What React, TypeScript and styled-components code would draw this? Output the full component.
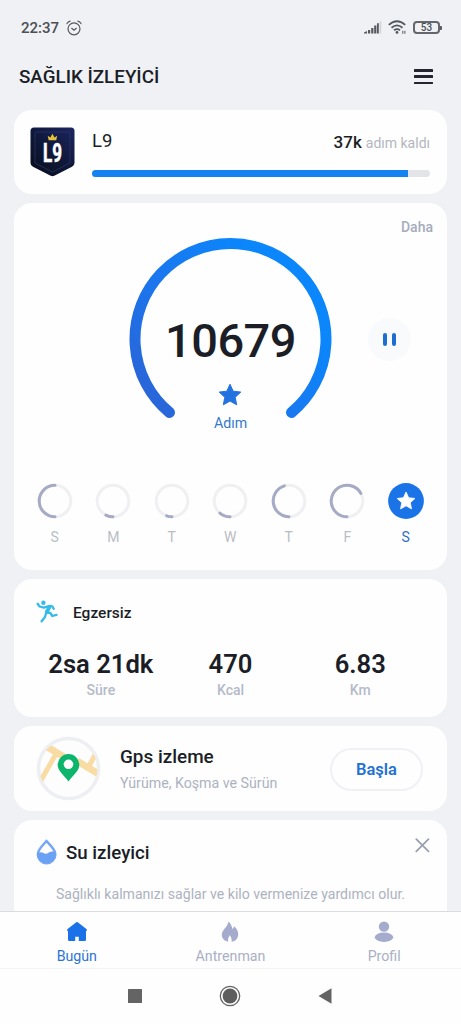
import React from 'react';
import styled, { createGlobalStyle } from 'styled-components';

const Global = createGlobalStyle`
  * { box-sizing: border-box; }
  body { margin: 0; background: #eff1f5; font-family: Roboto, "Noto Sans", sans-serif; }
`;

const Screen = styled.div`
  width: 461px;
  height: 1024px;
  overflow: hidden;
  display: flex;
  flex-direction: column;
  background: #eff1f5;
  color: #1b1e27;
`;

const Text = styled.span<{ $size?: number; $weight?: number; $color?: string; $track?: number; $line?: number }>`
  display: block;
  white-space: nowrap;
  font-size: ${p => p.$size ?? 14}px;
  font-weight: ${p => p.$weight ?? 400};
  color: ${p => p.$color ?? '#1b1e27'};
  letter-spacing: ${p => p.$track ?? 0}px;
  line-height: ${p => p.$line ?? 20}px;
`;

const StatusBar = styled.div`
  height: 55px;
  flex: none;
  display: flex;
  align-items: center;
  justify-content: space-between;
  padding: 0 19px 0 21px;
`;

const StatusGroup = styled.div<{ $gap: number }>`
  display: flex;
  align-items: center;
  gap: ${p => p.$gap}px;
`;

const Header = styled.header`
  height: 55px;
  flex: none;
  display: flex;
  align-items: flex-start;
  justify-content: space-between;
  padding: 12px 28px 0 19px;
`;

const MenuButton = styled.div`
  width: 19px;
  height: 15px;
  margin-top: 2px;
  display: flex;
  flex-direction: column;
  justify-content: space-between;
  & > i { display: block; height: 2.5px; background: #23262e; border-radius: 0.5px; }
`;

const Feed = styled.main`
  flex: 1;
  min-height: 0;
  overflow: hidden;
  padding: 0 14px;
  display: flex;
  flex-direction: column;
  gap: 9px;
`;

const Card = styled.section<{ $height: number }>`
  flex: none;
  height: ${p => p.$height}px;
  border-radius: 18px;
  background: #fefefe;
`;

const LevelCard = styled(Card)`
  display: flex;
  padding: 17px 17px 0 16px;
  gap: 17px;
`;

const LevelBody = styled.div`
  flex: 1;
  padding-top: 4px;
`;

const LevelRow = styled.div`
  display: flex;
  justify-content: space-between;
  height: 39px;
`;

const Remaining = styled.div`
  display: flex;
  align-items: baseline;
  gap: 4px;
  padding-top: 1px;
`;

const Track = styled.div`
  height: 7px;
  border-radius: 4px;
  overflow: hidden;
  background: #e3e4e7;
`;

const Fill = styled.div`
  height: 100%;
  width: 93.5%;
  background: #1482f0;
`;

const StepsCard = styled(Card)`
  display: flex;
  flex-direction: column;
`;

const More = styled.div`
  display: flex;
  justify-content: flex-end;
  padding: 14px 14px 0 0;
  height: 34px;
`;

const GaugeRow = styled.div`
  height: 190px;
  display: grid;
  grid-template-columns: 115px 203px 1fr;
`;

const Gauge = styled.div`
  grid-column: 2;
  display: grid;
  & > * { grid-area: 1 / 1; }
`;

const GaugeText = styled.div`
  display: flex;
  flex-direction: column;
  align-items: center;
  padding-top: 74px;
`;

const StarSlot = styled.div`
  height: 24px;
  margin: 12px 1px 6px 0;
`;

const PauseButton = styled.div`
  width: 43px;
  height: 43px;
  margin: 81px 0 0 36px;
  border-radius: 50%;
  background: #f8fafc;
  display: flex;
  align-items: center;
  justify-content: center;
  gap: 5px;
  & > i { width: 4px; height: 13px; border-radius: 2px; background: #1c6fd0; }
`;

const Week = styled.div`
  margin-top: 56px;
  padding: 0 11.5px;
  display: grid;
  grid-template-columns: repeat(7, 58.5px);
`;

const Day = styled.div`
  display: flex;
  flex-direction: column;
  align-items: center;
  gap: 8px;
  & > svg { display: block; }
`;

const ExerciseHead = styled.div`
  display: flex;
  align-items: center;
  gap: 15px;
  padding: 21px 0 0 22px;
  height: 46px;
  & > svg { margin-bottom: 3px; }
`;

const Stats = styled.div`
  display: grid;
  grid-template-columns: repeat(3, 129.7px);
  padding: 24px 0 0 22px;
`;

const Stat = styled.div`
  display: flex;
  flex-direction: column;
  align-items: center;
  gap: 1px;
`;

const GpsCard = styled(Card)`
  display: flex;
  align-items: center;
  padding: 0 24px 0 22px;
`;

const GpsBody = styled.div`
  flex: 1;
  padding: 3px 0 0 19px;
  display: flex;
  flex-direction: column;
  gap: 6px;
`;

const StartButton = styled.div`
  width: 93px;
  height: 43px;
  margin-top: 1px;
  padding-top: 1px;
  border: 2.5px solid #f0f1f4;
  border-radius: 22px;
  display: flex;
  align-items: center;
  justify-content: center;
`;

const WaterHead = styled.div`
  display: flex;
  align-items: flex-start;
  padding: 18px 17px 0 22px;
  height: 64px;
  & > svg:last-child { margin-left: auto; }
`;

const WaterTitle = styled.div`
  padding: 5px 0 0 8px;
`;

const Centered = styled.div`
  display: flex;
  justify-content: center;
`;

const TabBar = styled.nav`
  height: 58px;
  flex: none;
  display: grid;
  grid-template-columns: repeat(3, 1fr);
  background: #fefefe;
  border-top: 1px solid #d9dbdf;
  border-bottom: 1px solid #f3f3f5;
`;

const Tab = styled.div`
  display: flex;
  flex-direction: column;
  align-items: center;
  padding-top: 9px;
  gap: 4px;
`;

const SystemBar = styled.div`
  height: 55px;
  flex: none;
  display: flex;
  align-items: center;
  justify-content: center;
  gap: 77px;
  background: #fefefe;
  padding: 0 2px 1px 0;
`;

const STAR = 'M12 1.2l3.2 7 7.6.9-5.6 5.2 1.5 7.5L12 18.1l-6.7 3.7 1.5-7.5L1.2 9.1l7.6-.9z';

function Alarm() {
  return (
    <svg width="16" height="16" viewBox="0 0 16 16" fill="none" stroke="#55585e" strokeWidth="1.2" strokeLinecap="round">
      <circle cx="8" cy="8.8" r="6" />
      <path d="M5.7 8.3L8 10.3l2.3-2M1 3.6Q2 1.6 4.1 1.2M15 3.6Q14 1.6 11.9 1.2" />
    </svg>
  );
}

function Signal() {
  return (
    <svg width="18" height="13" viewBox="0 0 18 13" fill="#55585e">
      <path d="M0 12.5V11.4L3 9.9v2.6zM4 9h2.2v3.5H4zM7.2 7h2.2v5.5H7.2zM10.2 4.5h2.2v8h-2.2zM13 2.3h1.8v10.2H13z" />
      <path d="M15.600.5h1.600v12h-1.600z" fill="#d0d2d6" />
    </svg>
  );
}

function Wifi() {
  return (
    <svg width="19" height="15" viewBox="0 0 19 15" fill="none" stroke="#55585e" strokeWidth="1.8">
      <path d="M.8 4.9Q9 -2.3 17.2 4.9M3.5 7.7Q9 3 14.5 7.7M6 10.3Q9 7.9 12 10.3" />
      <circle cx="9" cy="12.4" r="1.4" fill="#55585e" stroke="none" />
      <path d="M14.8 10.8v3M16.9 10.8v3" strokeWidth="1" />
    </svg>
  );
}

const Battery = styled.div`
  width: 27px;
  height: 13px;
  border: 2px solid #63666c;
  border-radius: 4px;
  display: flex;
  align-items: center;
  justify-content: center;
`;

const BatteryTip = styled.i`
  width: 2px;
  height: 4px;
  border-radius: 0 1px 1px 0;
  background: #5a5d63;
`;

function Badge() {
  return (
    <svg width="45" height="50" viewBox="0 0 45 50">
      <defs>
        <linearGradient id="badge" x1="1" y1="0" x2="0.2" y2="1">
          <stop offset="0" stopColor="#1d2560" />
          <stop offset="0.5" stopColor="#10193d" />
          <stop offset="1" stopColor="#090e1d" />
        </linearGradient>
      </defs>
      <path d="M4 .5H41Q44.5.5 44.5 4V36Q44.5 38.5 42 39.8L24.3 48.8Q22.5 49.7 20.7 48.8L3 39.8Q.5 38.5.5 36V4Q.5.5 4 .5Z" fill="url(#badge)" />
      <path d="M7 5H38Q40 5 40 7V36L22.5 45 5 36V7Q5 5 7 5Z" fill="none" stroke="#2b3868" strokeWidth=".7" />
      <path d="M18.7 13.2L17.7 8.8 20.4 10.4 22.4 6.8 24.5 10.4 27.2 8.8 26.2 13.2Z" fill="#e8c23a" />
      <text x="22.5" y="34.5" textAnchor="middle" textLength="19" lengthAdjust="spacingAndGlyphs" fontFamily="Roboto, sans-serif" fontWeight="700" fontSize="26" fill="#fff" stroke="#fff" strokeWidth=".6">L9</text>
    </svg>
  );
}

function GaugeArc() {
  return (
    <svg width="203" height="190" viewBox="0 0 203 190" fill="none">
      <defs>
        <linearGradient id="arc" gradientUnits="userSpaceOnUse" x1="20" y1="180" x2="160" y2="60">
          <stop offset="0" stopColor="#2b63d6" />
          <stop offset="0.5" stopColor="#1b76ee" />
          <stop offset="1" stopColor="#0b86fb" />
        </linearGradient>
      </defs>
      <path d="M40.5 175.500A95.5 95.5 0 1 1 162.500 175.500" stroke="url(#arc)" strokeWidth="11" strokeLinecap="round" />
    </svg>
  );
}

/* `from` and `to` are degrees clockwise from the top of the ring. */
function DayRing({ from, to }: { from: number; to: number }) {
  const at = (deg: number) => {
    const a = (deg * Math.PI) / 180;
    return `${18 + 15.8 * Math.sin(a)} ${18 - 15.8 * Math.cos(a)}`;
  };
  return (
    <svg width="36" height="36" viewBox="0 0 36 36" fill="none" strokeWidth="3">
      <circle cx="18" cy="18" r="15.8" stroke="#f0f0f3" />
      <path d={`M${at(from)}A15.8 15.8 0 ${to - from > 180 ? 1 : 0} 1 ${at(to)}`} stroke="#a5abc5" strokeLinecap="round" />
    </svg>
  );
}

function TodayRing() {
  return (
    <svg width="36" height="36" viewBox="0 0 36 36">
      <circle cx="18" cy="18" r="17.9" fill="#1a74e8" />
      <path d={STAR} fill="#fff" stroke="#fff" strokeLinejoin="round" transform="translate(8.2 8) scale(.82)" />
    </svg>
  );
}

function Runner() {
  return (
    <svg width="22" height="23" viewBox="0 0 22 23" fill="none" stroke="#35bbe6" strokeWidth="2.3" strokeLinecap="round" strokeLinejoin="round">
      <circle cx="7.4" cy="2.8" r="2.2" fill="#35bbe6" stroke="none" />
      <path d="M1.600 3.800L3.600 6.500 8 7.600 13.500 5.800 16.300 6.300 17.700 8.800" />
      <path d="M13.300 7.300L10.700 12" strokeWidth="3.800" />
      <path d="M10.500 12.300L14.300 13 16.300 16 20.500 14.900M10 13.500L9 17 5.600 21.300" />
    </svg>
  );
}

function MapBadge() {
  return (
    <svg width="65" height="65" viewBox="0 0 65 65">
      <defs><clipPath id="map"><circle cx="32.5" cy="32.5" r="29" /></clipPath></defs>
      <circle cx="32.5" cy="32.5" r="30" fill="#fdfdfe" stroke="#eeeff3" strokeWidth="3.5" />
      <g clipPath="url(#map)" stroke="#f9dca4" fill="none">
        <path d="M8 9L28 21M41 25L62 37.500" strokeWidth="7" />
        <path d="M20.500 17L4 46" strokeWidth="5" />
        <path d="M52 32L60 17" strokeWidth="5" />
      </g>
      <path d="M32.5 45.5C29 40 21.7 35.5 21.7 28.8A10.8 10.8 0 0 1 43.3 28.8C43.3 35.5 36 40 32.5 45.5Z" fill="#0cb56b" />
      <circle cx="32.5" cy="28.3" r="4.8" fill="#fff" />
    </svg>
  );
}

function Drop() {
  return (
    <svg width="22" height="27" viewBox="0 0 22 27">
      <path d="M10.5 2.8C8 6.500 1.800 11 1.800 16.500A8.800 8.800 0 0 0 19.400 16.500C19.400 11 13 6.500 10.500 2.800Z" fill="#fefefe" stroke="#74a6f2" strokeWidth="2.400" strokeLinejoin="round" />
      <path d="M1.500 15.500C3.500 13.500 6 14.500 8.500 15.500C12 16.800 13.500 12 19.500 14A9.300 9.300 0 0 1 1.500 18.500Z" fill="#69a1f4" />
    </svg>
  );
}

function Close() {
  return (
    <svg width="15" height="15" viewBox="0 0 15 15" stroke="#989eae" strokeWidth="1.7" strokeLinecap="round">
      <path d="M1.3 1.2L13.5 13.4M13.5 1.2L1.3 13.4" />
    </svg>
  );
}

const tabIcons = {
  home: <path d="M10.2 1.3Q11 .8 11.800 1.300L20.700 8.300Q21.500 9.700 20.200 10H20V18.700Q20 20 18.700 20H12.800V15.800H9.200V20H3.300Q2 20 2 18.700V10H1.800Q.5 9.700 1.300 8.300Z" />,
  flame: <path d="M9.5.5C11.5 2.5 13 5 13.3 8C14.3 7.4 14.6 6.5 14.9 5.2C17.8 7.500 19.600 10.500 19.200 14C18.800 17.700 16.300 20.300 12.600 20.700C13 18.500 12.300 16.300 10.800 14.300C9.300 16.300 8.700 18.500 9.300 20.700C5.300 20 2.800 17.500 2.800 13.500C2.800 9 8.500 6.500 9.500.5Z" />,
  user: <><circle cx="11" cy="5.6" r="5.2" /><ellipse cx="11" cy="16.2" rx="9.2" ry="4.7" /></>,
};

const days = [
  { label: 'S', from: 180, to: 360 },
  { label: 'M', from: 180, to: 207 },
  { label: 'T', from: 180, to: 200 },
  { label: 'W', from: 180, to: 220 },
  { label: 'T', from: 180, to: 343 },
  { label: 'F', from: 180, to: 421 },
];

const stats = [
  { value: '2sa 21dk', label: 'Süre' },
  { value: '470', label: 'Kcal' },
  { value: '6.83', label: 'Km' },
];

const tabs = [
  { icon: tabIcons.home, label: 'Bugün', fill: '#1b72e8', color: '#2b74d6' },
  { icon: tabIcons.flame, label: 'Antrenman', fill: '#a4abcd', color: '#a9b0c3' },
  { icon: tabIcons.user, label: 'Profil', fill: '#a4abcd', color: '#a9b0c3' },
];

export default function App() {
  return (
    <>
      <Global />
      <Screen>
        <StatusBar>
          <StatusGroup $gap={7}>
            <Text $size={15} $weight={500} $color="#4c4f56">22:37</Text>
            <Alarm />
          </StatusGroup>
          <StatusGroup $gap={6}>
            <Signal />
            <Wifi />
            <StatusGroup $gap={0}>
              <Battery><Text $size={10} $weight={500} $color="#4c4f56" $line={10}>53</Text></Battery>
              <BatteryTip />
            </StatusGroup>
          </StatusGroup>
        </StatusBar>
        <Header>
          <Text $size={18.8} $weight={500}>SAĞLIK İZLEYİCİ</Text>
          <MenuButton><i /><i /><i /></MenuButton>
        </Header>
        <Feed>
          <LevelCard $height={84}>
            <Badge />
            <LevelBody>
              <LevelRow>
                <Text $size={18.5}>L9</Text>
                <Remaining>
                  <Text $size={17} $weight={500}>37k</Text>
                  <Text $color="#b3b6be">adım kaldı</Text>
                </Remaining>
              </LevelRow>
              <Track><Fill /></Track>
            </LevelBody>
          </LevelCard>

          <StepsCard $height={367}>
            <More><Text $weight={500} $color="#a6abbd">Daha</Text></More>
            <GaugeRow>
              <Gauge>
                <GaugeArc />
                <GaugeText>
                  <Text $size={47} $weight={500} $line={60} $track={-0.5}>10679</Text>
                  <StarSlot>
                    <svg width="24" height="24" viewBox="0 0 24 24"><path d={STAR} fill="#2273e0" stroke="#2273e0" strokeLinejoin="round" /></svg>
                  </StarSlot>
                  <Text $size={14.2} $color="#3579cf">Adım</Text>
                </GaugeText>
              </Gauge>
              <PauseButton><i /><i /></PauseButton>
            </GaugeRow>
            <Week>
              {days.map((d, i) => (
                <Day key={i}>
                  <DayRing from={d.from} to={d.to} />
                  <Text $color="#b9bdc4">{d.label}</Text>
                </Day>
              ))}
              <Day>
                <TodayRing />
                <Text $color="#2f6fc4">S</Text>
              </Day>
            </Week>
          </StepsCard>

          <Card $height={138}>
            <ExerciseHead>
              <Runner />
              <Text $size={15.5} $weight={500}>Egzersiz</Text>
            </ExerciseHead>
            <Stats>
              {stats.map(s => (
                <Stat key={s.label}>
                  <Text $size={25.6} $weight={600} $line={30}>{s.value}</Text>
                  <Text $weight={500} $color="#b4bac8">{s.label}</Text>
                </Stat>
              ))}
            </Stats>
          </Card>

          <GpsCard $height={85}>
            <MapBadge />
            <GpsBody>
              <Text $size={18.9} $weight={500}>Gps izleme</Text>
              <Text $size={14.2} $color="#adb2bf">Yürüme, Koşma ve Sürün</Text>
            </GpsBody>
            <StartButton><Text $size={16.5} $weight={600} $color="#1f71d2">Başla</Text></StartButton>
          </GpsCard>

          <Card $height={120}>
            <WaterHead>
              <Drop />
              <WaterTitle><Text $size={18.7} $weight={500}>Su izleyici</Text></WaterTitle>
              <Close />
            </WaterHead>
            <Centered><Text $size={14.1} $color="#adb2bf">Sağlıklı kalmanızı sağlar ve kilo vermenize yardımcı olur.</Text></Centered>
          </Card>
        </Feed>
        <TabBar>
          {tabs.map(t => (
            <Tab key={t.label}>
              <svg width="22" height="21" viewBox="0 0 22 21" fill={t.fill}>{t.icon}</svg>
              <Text $size={14.2} $color={t.color}>{t.label}</Text>
            </Tab>
          ))}
        </TabBar>
        <SystemBar>
          <svg width="14" height="14" viewBox="0 0 14 14"><rect width="14" height="14" rx=".5" fill="#646464" /></svg>
          <svg width="22" height="22" viewBox="0 0 22 22"><circle cx="11" cy="11" r="9.7" fill="none" stroke="#646464" strokeWidth="1.3" /><circle cx="11" cy="11" r="7.4" fill="#5e5e5e" /></svg>
          <svg width="14" height="16" viewBox="0 0 14 16"><path d="M.5 8L13.5.3V15.7Z" fill="#646464" /></svg>
        </SystemBar>
      </Screen>
    </>
  );
}
